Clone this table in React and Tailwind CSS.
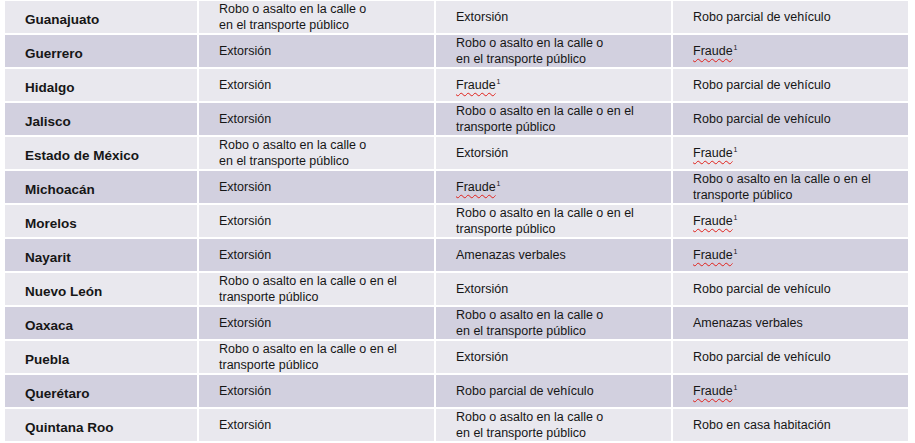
import React from 'react';

const ROBO_CALLE_A = ['Robo o asalto en la calle o', 'en el transporte público'];
const ROBO_CALLE_B = ['Robo o asalto en la calle o en el', 'transporte público'];
const FRAUDE = 'FRAUDE';

const rows = [
  ['Guanajuato', ROBO_CALLE_A, 'Extorsión', 'Robo parcial de vehículo'],
  ['Guerrero', 'Extorsión', ROBO_CALLE_A, FRAUDE],
  ['Hidalgo', 'Extorsión', FRAUDE, 'Robo parcial de vehículo'],
  ['Jalisco', 'Extorsión', ROBO_CALLE_B, 'Robo parcial de vehículo'],
  ['Estado de México', ROBO_CALLE_A, 'Extorsión', FRAUDE],
  ['Michoacán', 'Extorsión', FRAUDE, ROBO_CALLE_B],
  ['Morelos', 'Extorsión', ROBO_CALLE_B, FRAUDE],
  ['Nayarit', 'Extorsión', 'Amenazas verbales', FRAUDE],
  ['Nuevo León', ROBO_CALLE_B, 'Extorsión', 'Robo parcial de vehículo'],
  ['Oaxaca', 'Extorsión', ROBO_CALLE_A, 'Amenazas verbales'],
  ['Puebla', ROBO_CALLE_B, 'Extorsión', 'Robo parcial de vehículo'],
  ['Querétaro', 'Extorsión', 'Robo parcial de vehículo', FRAUDE],
  ['Quintana Roo', 'Extorsión', ROBO_CALLE_A, 'Robo en casa habitación'],
];

const CellText = ({ value }) => {
  if (value === FRAUDE) {
    return (
      <span className="inline-flex items-start">
        <span className="underline decoration-wavy decoration-[#e0201a] decoration-1 underline-offset-[3px]">Fraude</span>
        <span className="text-[7px] leading-[7px] ml-[1px] mt-[1px]">1</span>
      </span>
    );
  }
  if (Array.isArray(value)) {
    return (
      <div>
        {value.map((line) => (
          <div key={line}>{line}</div>
        ))}
      </div>
    );
  }
  return <span>{value}</span>;
};

export default function App() {
  return (
    <div className="w-[915px] h-[443px] bg-white pl-[5px] pt-[1px] overflow-hidden" style={{ fontFamily: '"Liberation Sans", Arial, sans-serif' }}>
      <div className="grid grid-cols-[192px_235px_235px_235px] auto-rows-[32px] gap-[2px] text-[12.5px] leading-[16px] text-[#161616]">
        {rows.map((row, i) => {
          const bg = i % 2 === 0 ? 'bg-[#e9e8ee]' : 'bg-[#d2d0df]';
          return (
            <React.Fragment key={row[0]}>
              <div className={`${bg} flex items-center pl-[20px] pt-[5px] font-bold text-[13.5px]`}>{row[0]}</div>
              {row.slice(1).map((cell, j) => (
                <div key={j} className={`${bg} flex items-center pl-[20px]`}>
                  <CellText value={cell} />
                </div>
              ))}
            </React.Fragment>
          );
        })}
      </div>
    </div>
  );
}
